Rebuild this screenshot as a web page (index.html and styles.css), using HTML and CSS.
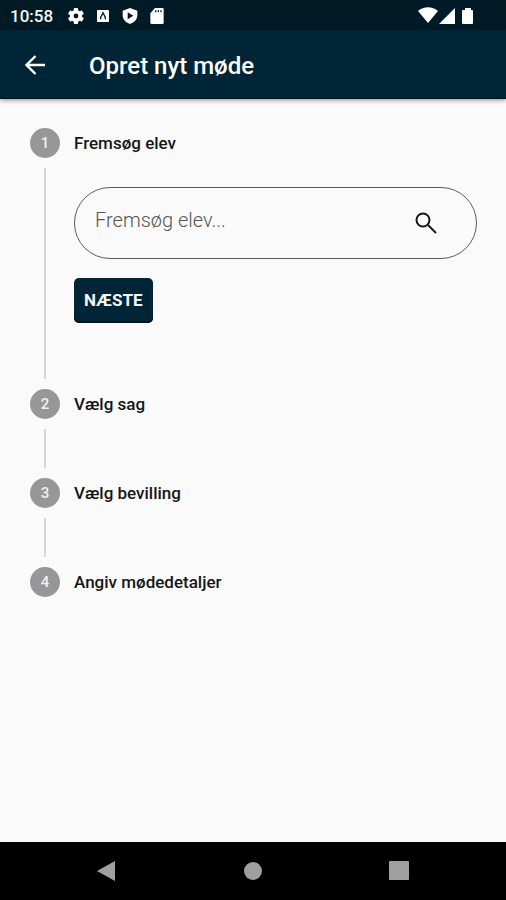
FILE: index.html
```html
<!DOCTYPE html>
<html lang="da">
<head>
<meta charset="utf-8">
<meta name="viewport" content="width=device-width, initial-scale=1">
<title>Opret nyt møde</title>
<link rel="stylesheet" href="styles.css">
</head>
<body>
<div class="status-bar">
  <span class="clock">10:58</span>
  <div class="notifications">
    <svg class="status-icon" viewBox="2 2 20 20" aria-hidden="true"><path d="M19.400 13a7.500 7.500 0 0 0 0-2l2.100-1.600a.5.5 0 0 0 .1-.6l-2-3.500a.5.5 0 0 0-.6-.2l-2.500 1a7.300 7.300 0 0 0-1.700-1l-.4-2.600a.5.5 0 0 0-.5-.5h-4a.5.5 0 0 0-.5.5L9 5.100a7.300 7.300 0 0 0-1.700 1l-2.500-1a.5.5 0 0 0-.6.2l-2 3.500a.5.5 0 0 0 .1.6L4.500 11a7.500 7.500 0 0 0 0 2l-2.200 1.600a.5.5 0 0 0-.1.6l2 3.500c.1.200.4.300.6.200l2.500-1a7.300 7.300 0 0 0 1.700 1l.4 2.600c0 .3.200.5.5.5h4c.3 0 .5-.2.5-.5l.4-2.600a7.300 7.300 0 0 0 1.700-1l2.500 1c.2.100.5 0 .6-.2l2-3.500a.5.5 0 0 0-.1-.6zM12 15a3 3 0 1 1 0-6 3 3 0 0 1 0 6z"/></svg>
    <svg class="status-icon" viewBox="0 0 24 24" aria-hidden="true"><rect x="3" y="3" width="18" height="18" rx="1"/><path class="cut-line" d="M8.500 17v-3L12 7l3.500 7v3"/></svg>
    <svg class="status-icon" viewBox="0 0 24 24" aria-hidden="true"><path fill-rule="evenodd" d="M12 0 1 4v7c0 6 4.500 11 11 13 6.500-2 11-7 11-13V4zM8.500 6.500v10.500l8.500-5.200z"/></svg>
    <svg class="status-icon" viewBox="0 0 24 24" aria-hidden="true"><path fill-rule="evenodd" d="M20 0H9L2 8v14a2 2 0 0 0 2 2h16a2 2 0 0 0 2-2V2a2 2 0 0 0-2-2zM9 3.500h2v3H9zm4 0h2v3h-2zm4 0h2v3h-2z"/></svg>
  </div>
  <svg class="system-icons" viewBox="0 0 56 18" aria-hidden="true"><path d="M0 4C6-1 14-1 20 4L10 16zM21 17 37 1V17zM44 4q0-1 1-1h2V1h6v2h1q1 0 1 1v12q0 1-1 1h-9q-1 0-1-1z"/></svg>
</div>
<header class="app-bar">
  <button class="back" type="button" aria-label="Tilbage"><svg class="back-icon" viewBox="0 0 20 20" aria-hidden="true"><path d="M20 10H2M10.500 1 1.500 10l9 9"/></svg></button>
  <h1 class="title">Opret nyt møde</h1>
</header>
<main class="content">
  <ol class="stepper">
    <li class="step">
      <div class="marker"><span class="number">1</span><span class="line"></span></div>
      <div class="step-main">
        <h2 class="step-title">Fremsøg elev</h2>
        <form class="step-body">
          <div class="search">
            <input class="search-input" type="text" placeholder="Fremsøg elev..." aria-label="Fremsøg elev">
            <button class="search-button" type="button" aria-label="Søg"><svg class="search-icon" viewBox="0 0 22 22" aria-hidden="true"><circle cx="8" cy="8" r="6.500"/><path d="m13 13 8 8"/></svg></button>
          </div>
          <button class="next" type="button">NÆSTE</button>
        </form>
      </div>
    </li>
    <li class="step">
      <div class="marker"><span class="number">2</span><span class="line"></span></div>
      <h2 class="step-title">Vælg sag</h2>
    </li>
    <li class="step">
      <div class="marker"><span class="number">3</span><span class="line"></span></div>
      <h2 class="step-title">Vælg bevilling</h2>
    </li>
    <li class="step">
      <div class="marker"><span class="number">4</span></div>
      <h2 class="step-title">Angiv mødedetaljer</h2>
    </li>
  </ol>
</main>
<nav class="nav-bar" aria-label="System">
  <button class="nav-button" type="button" aria-label="Tilbage"><svg class="nav-icon" viewBox="0 0 20 20" aria-hidden="true"><path d="M0 10 18 0v20z"/></svg></button>
  <button class="nav-button" type="button" aria-label="Hjem"><svg class="nav-icon" viewBox="0 0 20 20" aria-hidden="true"><circle cx="10" cy="10" r="9"/></svg></button>
  <button class="nav-button" type="button" aria-label="Oversigt"><svg class="nav-icon" viewBox="0 0 20 20" aria-hidden="true"><rect width="20" height="19" rx="1"/></svg></button>
</nav>
</body>
</html>
```
FILE: styles.css
```css
* {
  box-sizing: border-box;
}

body {
  margin: 0;
  min-height: 100vh;
  display: flex;
  flex-direction: column;
  background: #fafafa;
  color: #161616;
  font-family: Roboto, "Liberation Sans", sans-serif;
}

button {
  padding: 0;
  border: 0;
  background: none;
  font-family: inherit;
}

h1,
h2,
ol {
  margin: 0;
  padding: 0;
}

svg {
  display: block;
}

.status-bar {
  display: flex;
  align-items: center;
  height: 30px;
  padding: 2px 32px 0 10px;
  background: #001b26;
  color: #f4f6f7;
}

.clock {
  font-size: 17px;
  font-weight: 500;
  line-height: 28px;
}

.notifications {
  display: flex;
  gap: 11px;
  margin-left: 15px;
}

.status-icon {
  width: 16px;
  height: 16px;
  fill: #fff;
}

.cut-line {
  fill: none;
  stroke: #001b26;
  stroke-width: 2;
}

.system-icons {
  width: 56px;
  height: 18px;
  margin-left: auto;
  fill: #fff;
}

.app-bar {
  display: flex;
  align-items: center;
  gap: 31px;
  height: 69px;
  padding: 2px 12px 0;
  background: #002536;
  border-bottom: 1px solid #00121c;
  box-shadow: 0 1px 5px rgba(0, 0, 0, 0.45);
}

.back {
  display: grid;
  place-items: center;
  width: 46px;
  height: 46px;
}

.back-icon {
  width: 20px;
  height: 20px;
  fill: none;
  stroke: #fff;
  stroke-width: 2.400;
}

.title {
  padding-top: 2px;
  color: #fff;
  font-size: 24px;
  font-weight: 500;
  line-height: 30px;
}

.content {
  flex: 1;
  padding: 29px 29px 29px 30px;
}

.stepper {
  list-style: none;
}

.step {
  display: grid;
  grid-template-columns: 30px 1fr;
  gap: 14px;
}

.marker {
  display: flex;
  flex-direction: column;
  align-items: center;
}

.number {
  width: 30px;
  height: 30px;
  border-radius: 50%;
  background: #979797;
  color: #f2f2f2;
  font-size: 15px;
  font-weight: 500;
  line-height: 30px;
  text-align: center;
}

.line {
  flex: 1;
  width: 2px;
  min-height: 39px;
  margin: 10px 0;
  background: #d6d6d6;
}

.step-title {
  font-size: 17px;
  font-weight: 500;
  line-height: 30px;
}

.step-body {
  padding: 29px 0 66px;
}

.search {
  display: flex;
  align-items: center;
  height: 72px;
  margin-bottom: 19px;
  padding: 0 28px 0 20px;
  border: 1px solid #5c5c5c;
  border-radius: 36px;
}

.search-input {
  flex: 1;
  min-width: 0;
  height: 46px;
  padding: 0 0 6px;
  border: 0;
  outline: 0;
  background: transparent;
  color: #161616;
  font-family: inherit;
  font-size: 20px;
  font-weight: 300;
}

.search-input::placeholder {
  color: #555;
  opacity: 1;
}

.search-button {
  display: grid;
  place-items: center;
  width: 44px;
  height: 44px;
}

.search-icon {
  width: 22px;
  height: 22px;
  fill: none;
  stroke: #161616;
  stroke-width: 2;
}

.next {
  display: block;
  height: 45px;
  padding: 0 10px;
  border-radius: 5px;
  background: #002536;
  box-shadow: inset 0 -2px #00131d;
  color: #f4f6f7;
  font-size: 17px;
  font-weight: 700;
  line-height: 45px;
}

.nav-bar {
  display: grid;
  grid-template-columns: repeat(3, 1fr);
  height: 58px;
  padding: 0 34px;
  background: #000;
}

.nav-button {
  display: grid;
  place-items: center;
}

.nav-icon {
  width: 20px;
  height: 20px;
  fill: #a0a0a0;
}
```
